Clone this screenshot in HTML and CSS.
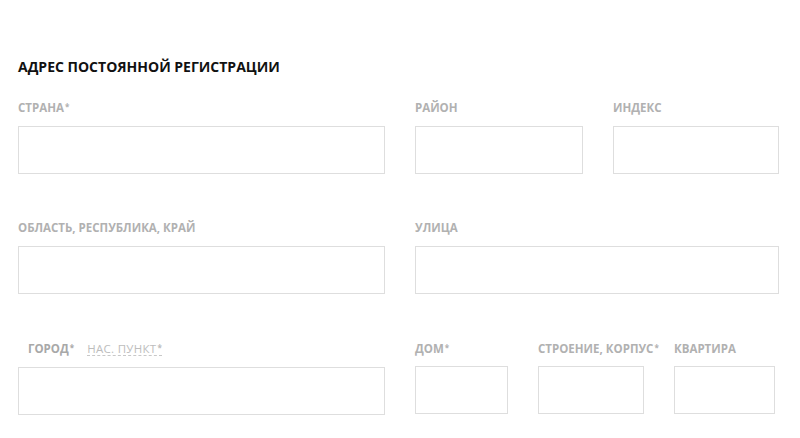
FILE: index.html
```html
<!DOCTYPE html>
<html lang="ru">
<head>
<meta charset="utf-8">
<link rel="stylesheet" href="styles.css">
</head>
<body>
<section class="form">
  <h2 class="title">Адрес постоянной регистрации</h2>

  <div class="row row-a">
    <div class="field"><div class="label">Страна<sup>*</sup></div><div class="input"></div></div>
    <div class="field"><div class="label">Район</div><div class="input"></div></div>
    <div class="field"><div class="label">Индекс</div><div class="input"></div></div>
  </div>

  <div class="row row-b">
    <div class="field"><div class="label">Область, республика, край</div><div class="input"></div></div>
    <div class="field"><div class="label">Улица</div><div class="input"></div></div>
  </div>

  <div class="row row-c">
    <div class="field">
      <div class="label tabs">
        <span class="tab active">Город<sup>*</sup></span>
        <span class="tab alt">Нас. пункт<sup>*</sup></span>
      </div>
      <div class="input city"></div>
    </div>
    <div class="field"><div class="label">Дом<sup>*</sup></div><div class="input"></div></div>
    <div class="field"><div class="label">Строение, корпус<sup>*</sup></div><div class="input"></div></div>
    <div class="field"><div class="label">Квартира</div><div class="input"></div></div>
  </div>
</section>
</body>
</html>
```

FILE: styles.css
```css
* { box-sizing: border-box; }
html, body { margin: 0; padding: 0; background: #fff; }
body { font-family: "Open Sans", "Liberation Sans", sans-serif; }

.form { padding: 57px 21px 0 18px; }

.title {
  margin: 0 0 24px;
  font-size: 14px;
  line-height: 20px;
  font-weight: 700;
  text-transform: uppercase;
  color: #111;
  letter-spacing: 0;
}

.row { display: grid; column-gap: 30px; margin-bottom: 47px; }
.row-a { grid-template-columns: 367px 168px 166px; }
.row-b { grid-template-columns: 367px 364px; margin-bottom: 48px; }
.row-c { grid-template-columns: 367px 93px 106px 101px; margin-bottom: 0; }

.label {
  font-size: 11.5px;
  line-height: 14px;
  font-weight: 700;
  text-transform: uppercase;
  color: #b1b1b1;
  margin-bottom: 11px;
  white-space: nowrap;
}
.label sup { font-size: 8px; font-weight: 700; vertical-align: top; position: relative; top: -1px; margin-left: 1px; }

.input { height: 48px; border: 1px solid #dedede; background: #fff; }
.row-c .input { margin-top: -1px; }
.row-c .input.city { margin-top: 0; }

.tabs { display: flex; gap: 13px; padding-left: 10px; }
.tab.active { color: #a8a8a8; }
.tab.alt {
  font-weight: 400;
  color: #bdbdbd;
  letter-spacing: 0.3px;
  border-bottom: 1px dashed #c8c8c8;
  line-height: 13px;
}
```
